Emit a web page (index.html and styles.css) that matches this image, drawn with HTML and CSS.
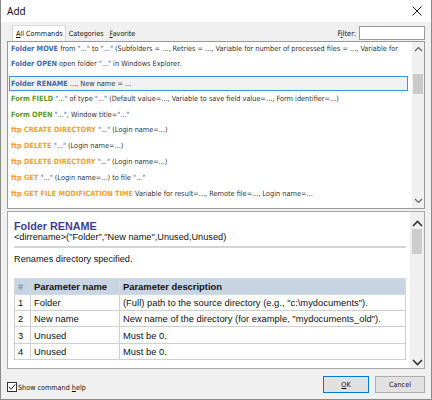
FILE: index.html
```html
<!DOCTYPE html>
<html>
<head>
<meta charset="utf-8">
<link rel="stylesheet" href="styles.css">
</head>
<body>
<div class="win">
  <div class="titlebar">
    <span class="title">Add</span>
    <svg class="close" width="10" height="10" viewBox="0 0 10 10"><path d="M0.5 0.5 L9.5 9.5 M9.5 0.5 L0.5 9.5" stroke="#222" stroke-width="1" fill="none"/></svg>
  </div>
  <div class="tabrow">
    <div class="tabs">
      <span class="tab active"><u>A</u>ll Commands</span>
      <span class="tab">Categories</span>
      <span class="tab"><u>F</u>avorite</span>
    </div>
    <div class="filter">
      <span>F<u>i</u>lter:</span>
      <span class="input"></span>
    </div>
  </div>
  <div class="list">
    <div class="rows">
      <div class="row first"><b class="fo">Folder MOVE</b> from <i>"..."</i> to <i>"..."</i> (Subfolders = ..., Retries = ..., Variable for number of processed files = ..., Variable for</div>
      <div class="row"><b class="fo">Folder OPEN</b> open folder <i>"..."</i> in Windows Explorer.</div>
      <div class="row sel"><b class="fo">Folder RENAME</b> ..., New name = ...</div>
      <div class="row"><b class="fm">Form FIELD</b> <i>"..."</i> of type <i>"..."</i> (Default value=..., Variable to save field value=..., Form identifier=...)</div>
      <div class="row"><b class="fm">Form OPEN</b> <i>"..."</i>, Window title=<i>"..."</i></div>
      <div class="row"><b class="ft">ftp CREATE DIRECTORY</b> <i>"..."</i> (Login name=...)</div>
      <div class="row"><b class="ft">ftp DELETE</b> <i>"..."</i> (Login name=...)</div>
      <div class="row"><b class="ft">ftp DELETE DIRECTORY</b> <i>"..."</i> (Login name=...)</div>
      <div class="row"><b class="ft">ftp GET</b> <i>"..."</i> (Login name=...) to file <i>"..."</i></div>
      <div class="row"><b class="ft">ftp GET FILE MODIFICATION TIME</b> Variable for result=..., Remote file=..., Login name=...</div>
    </div>
    <div class="sbar">
      <svg class="arr" width="9" height="6" viewBox="0 0 9 6"><path d="M1 5 L4.5 1.5 L8 5" stroke="#606060" stroke-width="1.2" fill="none"/></svg>
      <div class="track"><div class="thumb t1"></div></div>
      <svg class="arr" width="9" height="6" viewBox="0 0 9 6"><path d="M1 1 L4.5 4.5 L8 1" stroke="#606060" stroke-width="1.2" fill="none"/></svg>
    </div>
  </div>
  <div class="help">
    <div class="hcontent">
      <div class="htitle">Folder RENAME</div>
      <div class="hsyn">&lt;dirrename&gt;("Folder","New name",Unused,Unused)</div>
      <div class="hr"></div>
      <div class="hdesc">Renames directory specified.</div>
      <table class="params">
        <tr><th class="c1">#</th><th class="c2">Parameter name</th><th>Parameter description</th></tr>
        <tr><td class="c1">1</td><td class="c2">Folder</td><td>(Full) path to the source directory (e.g., "c:\mydocuments").</td></tr>
        <tr><td class="c1">2</td><td class="c2">New name</td><td>New name of the directory (for example, "mydocuments_old").</td></tr>
        <tr><td class="c1">3</td><td class="c2">Unused</td><td>Must be 0.</td></tr>
        <tr><td class="c1">4</td><td class="c2">Unused</td><td>Must be 0.</td></tr>
      </table>
    </div>
    <div class="sbar hbar">
      <svg class="arr" width="11" height="7" viewBox="0 0 11 7"><path d="M1 6 L5.5 1.5 L10 6" stroke="#333" stroke-width="1.6" fill="none"/></svg>
      <div class="track"><div class="thumb t2"></div></div>
      <svg class="arr" width="11" height="7" viewBox="0 0 11 7"><path d="M1 1 L5.5 5.5 L10 1" stroke="#333" stroke-width="1.6" fill="none"/></svg>
    </div>
  </div>
  <div class="footer">
    <label class="chk">
      <span class="box"><svg width="9" height="8" viewBox="0 0 9 8"><path d="M1 4 L3.5 6.5 L8 1" stroke="#222" stroke-width="1.1" fill="none"/></svg></span>
      <span>Show command <u>h</u>elp</span>
    </label>
    <div class="btns">
      <span class="btn ok"><u>O</u>K</span>
      <span class="btn">Cancel</span>
    </div>
  </div>
</div>
</body>
</html>
```
FILE: styles.css
```css
html, body { margin: 0; padding: 0; }
body { width: 432px; height: 400px; overflow: hidden; background: #fff; }
.win {
  width: 432px; height: 400px; box-sizing: border-box;
  border: 1px solid #8a8a8a; border-top: none;
  background: #f0f0f0;
  display: flex; flex-direction: column;
  font-family: "DejaVu Sans Condensed", "DejaVu Sans", sans-serif; color: #222;
}
.titlebar {
  height: 22px; background: #fff; display: flex; align-items: center;
  justify-content: space-between; padding: 0 9px 0 6px; flex: none;
}
.title { font-family: "Noto Sans", sans-serif; font-size: 10px; color: #111; }
.tabrow {
  height: 19px; flex: none; display: flex; justify-content: space-between;
  align-items: flex-end; padding: 0 6px 0 11px;
}
.tabs { display: flex; align-items: flex-end; font-size: 7.2px; }
.tab { padding: 0 3px 2px; line-height: 11px; color: #111; }
.tab.active {
  background: #fff; border: 1px solid #d9d9d9; border-bottom: none;
  padding: 2px 2px 3px 3px; margin-bottom: -1px;
}
.filter { display: flex; align-items: center; gap: 3px; font-size: 7.4px; height: 16px; }
.input { width: 66px; height: 14px; background: #fff; border: 1px solid #9a9a9a; box-sizing: border-box; }
.list {
  margin: 0 6px; height: 168px; flex: none; background: #fff;
  border: 1px solid #9a9a9a; box-sizing: border-box;
  display: flex; overflow: hidden;
}
.rows { flex: 1; padding: 0 0 0 1px; overflow: hidden; font-size: 7.3px; }
.row { height: 15.8px; line-height: 15.8px; white-space: nowrap; padding-left: 2px; color: #333; }
.row.first { height: 14px; line-height: 13px; }
.row.sel {
  margin-top: 4px; height: 15px; line-height: 13px; box-sizing: border-box;
  border: 1px solid #3f92e0; background: #f1f1f1; margin-right: 4px; padding-left: 1px;
}
.row b { font-weight: bold; }
.row i { font-style: normal; color: #2a4fb0; }
.fo { color: #3e6aab; }
.fm { color: #5f9a22; }
.ft { color: #f2a32b; }
.sbar {
  width: 12px; flex: none; background: #f0f0f0; display: flex;
  flex-direction: column; align-items: center; padding: 4px 0;
}
.arr { flex: none; }
.track { flex: 1; width: 100%; position: relative; }
.thumb { position: absolute; left: 1px; right: 1px; background: #c9c9c9; }
.t1 { top: 22px; height: 20px; }
.help {
  margin: 2px 6px 0; height: 158px; flex: none; background: #fff;
  border: 1px solid #a8a8a8; box-sizing: border-box; display: flex; overflow: hidden;
}
.hcontent { flex: 1; padding: 9px 4px 0 6px; font-family: "Liberation Sans", Arial, sans-serif; font-size: 9.2px; color: #111; }
.htitle { font-size: 10.8px; font-weight: bold; color: #3d3f8e; line-height: 11px; }
.hsyn { line-height: 11px; }
.hr { height: 2px; background: #d4d4d4; margin: 3px 0 0; }
.hdesc { margin-top: 5.5px; line-height: 11px; }
.params { margin-top: 13px; width: 100%; border-collapse: collapse; font-size: 9.4px; }
.params th, .params td { border: 1px solid #cfcfcf; height: 15.3px; padding: 0 4px 0 3px; text-align: left; white-space: nowrap; }
.params th { background: #c7d4e2; font-weight: bold; border-color: #d3dbe4; }
.params th.c1 { color: #7a8aa0; font-weight: bold; }
.c1 { width: 8px; }
.c2 { width: 81px; }
.hbar { width: 14px; padding: 8px 0 2px; background: #f0f0f0; }
.t2 { top: 2px; height: 25px; left: 2px; right: 2px; background: #cdcdcd; }
.footer {
  flex: 1; display: flex; justify-content: space-between; align-items: center;
  padding: 4px 6px 0 6px;
}
.chk { display: flex; align-items: center; gap: 1px; font-size: 7.2px; color: #111; margin-top: 2px; }
.box {
  width: 10px; height: 10px; border: 1px solid #333; box-sizing: border-box; background: #fff;
  display: flex; align-items: center; justify-content: center;
}
.btns { display: flex; gap: 6px; margin-top: -3px; }
.btn {
  width: 50px; height: 17px; box-sizing: border-box; border: 1px solid #adadad;
  background: #e1e1e1; font-size: 7.2px; display: flex; align-items: center; justify-content: center; color: #111;
}
.btn.ok { border: 1px solid #0078d7; width: 46px; }
```
